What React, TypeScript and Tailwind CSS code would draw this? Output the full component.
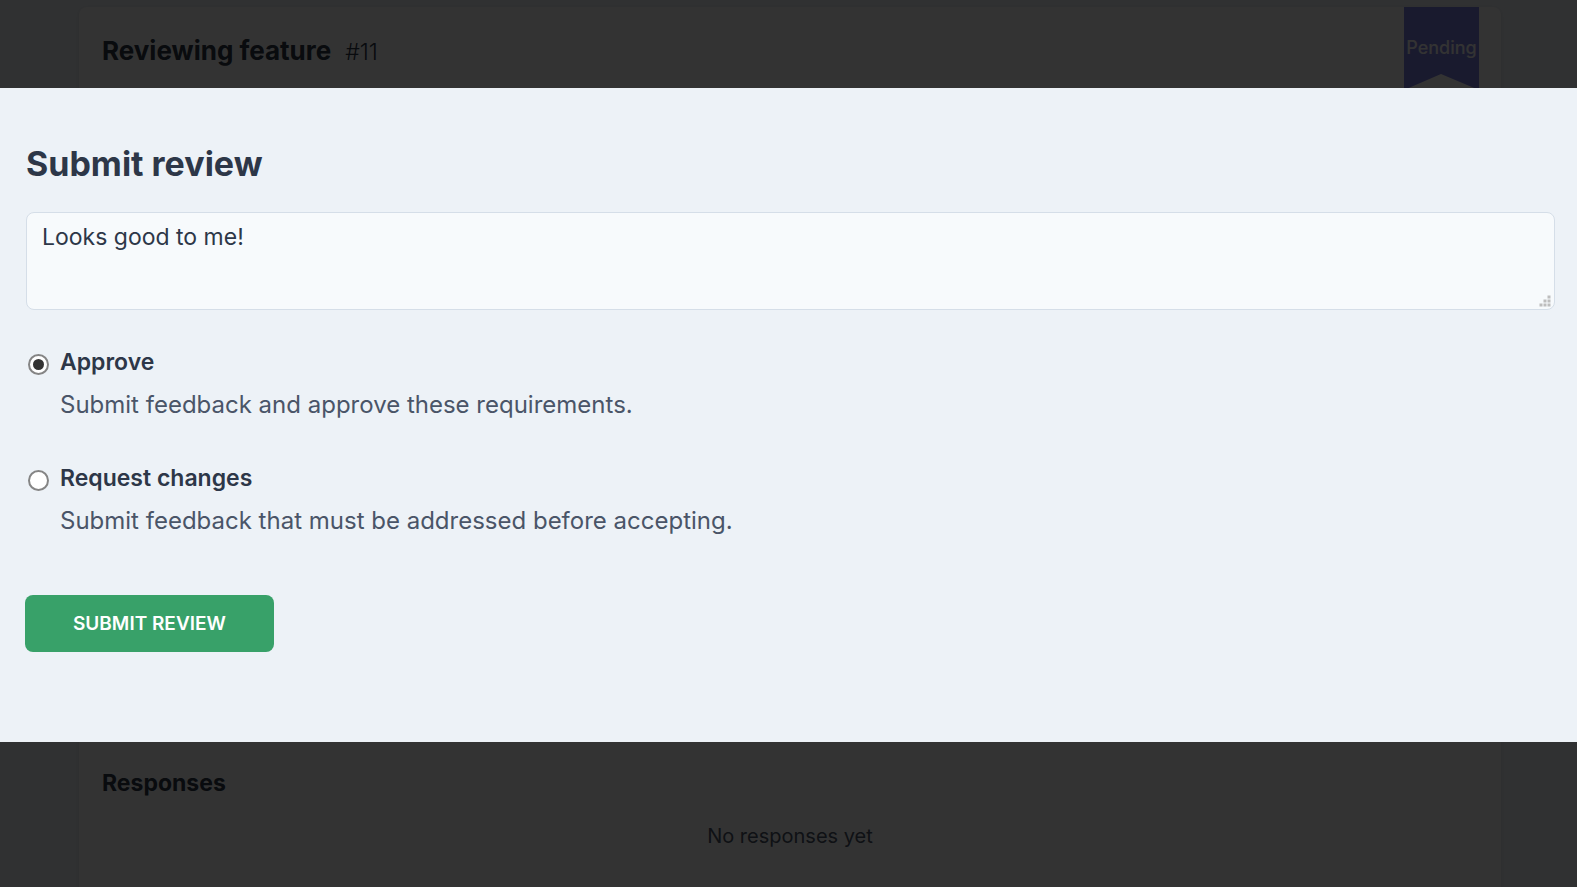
import { useState } from "react";

type Option = { id: string; title: string; description: string };

const options: Option[] = [
  {
    id: "approve",
    title: "Approve",
    description: "Submit feedback and approve these requirements.",
  },
  {
    id: "request-changes",
    title: "Request changes",
    description: "Submit feedback that must be addressed before accepting.",
  },
];

function PendingRibbon() {
  return (
    <div className="absolute top-0 right-[22px] w-[75px] h-[87px] flex justify-center pt-[28px] text-[18px] leading-[26px] font-medium text-white">
      <svg
        className="absolute inset-0 h-full w-full"
        viewBox="0 0 75 87"
        aria-hidden="true"
      >
        <path d="M0 0H75V83L37 67L0 83Z" fill="#7f82e6" />
      </svg>
      <span className="relative">Pending</span>
    </div>
  );
}

function ReviewPage() {
  return (
    <main className="flex min-h-screen flex-col bg-[#edf2f7] pt-[7px] pl-[79px] pr-[76px]">
      <article className="relative flex flex-1 flex-col justify-between rounded-t-lg bg-white px-[23px] text-[#2d3748] shadow-sm">
        <header className="flex items-baseline gap-[14px] pt-[26px]">
          <h1 className="text-[26px] leading-[36px] font-bold">Reviewing feature</h1>
          <span className="text-[23px] leading-[36px] font-light">#11</span>
        </header>
        <PendingRibbon />
        <section className="pb-[36px]">
          <h2 className="text-[23px] leading-[32px] font-bold">Responses</h2>
          <p className="mt-[22px] text-center text-[20px] leading-[30px] text-[#4a5568]">
            No responses yet
          </p>
        </section>
      </article>
    </main>
  );
}

function ReviewDialog() {
  const [choice, setChoice] = useState("approve");
  return (
    <div className="fixed inset-0 bg-black/80 pt-[88px]">
      <form
        role="dialog"
        aria-labelledby="review-title"
        onSubmit={(e) => e.preventDefault()}
        className="bg-[#edf2f7] pt-[52px] pb-[90px] pl-[26px] pr-[22px] text-[#2d3748]"
      >
        <h2 id="review-title" className="text-[34px] leading-[48px] font-bold">
          Submit review
        </h2>
        <div className="relative mt-[24px]">
          <textarea
            aria-label="Review comment"
            defaultValue="Looks good to me!"
            className="block h-[98px] w-full resize-none rounded-lg border border-[#d5dee8] bg-[#f7fafc] px-[15px] py-[7px] text-[23px] leading-[34px] outline-none"
          />
          <svg
            className="absolute right-[4px] bottom-[3px] h-[12px] w-[12px]"
            viewBox="0 0 12 12"
            fill="#bdbdbd"
            aria-hidden="true"
          >
            <path d="M8.5 0.5h3v3h-3zM4.5 4.5h3v3h-3zM8.5 4.5h3v3h-3zM0.5 8.5h3v3h-3zM4.5 8.5h3v3h-3zM8.5 8.5h3v3h-3z" />
          </svg>
        </div>
        <div className="mt-[35px] flex flex-col gap-[39px]">
          {options.map((o) => (
            <label key={o.id} htmlFor={o.id} className="flex gap-[11px] pl-[2px]">
              <input
                id={o.id}
                type="radio"
                name="decision"
                checked={choice === o.id}
                onChange={() => setChoice(o.id)}
                className="mt-[9px] grid size-[21px] shrink-0 appearance-none place-items-center rounded-full border-2 border-[#858585] bg-white before:size-[11px] before:rounded-full checked:before:bg-[#333333]"
              />
              <span className="flex flex-col gap-[9px] leading-[34px]">
                <span className="text-[23px] font-semibold">{o.title}</span>
                <span className="text-[24px] text-[#4a5568]">{o.description}</span>
              </span>
            </label>
          ))}
        </div>
        <button
          type="submit"
          className="-ml-px mt-[57px] block h-[57px] rounded-lg bg-[#38a169] px-[48px] pt-[2px] text-[19px] font-semibold text-white uppercase"
        >
          Submit review
        </button>
      </form>
    </div>
  );
}

export default function App() {
  return (
    <div className="font-['Inter','Liberation_Sans',sans-serif]">
      <ReviewPage />
      <ReviewDialog />
    </div>
  );
}
